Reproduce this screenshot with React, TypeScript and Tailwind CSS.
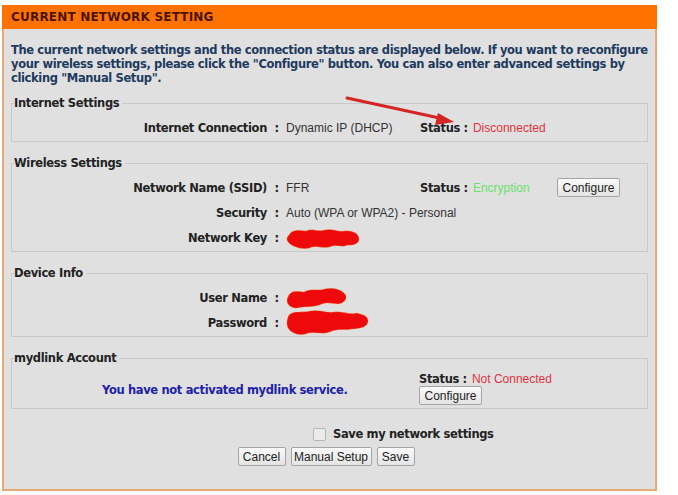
import React from "react";

const bold =
  "font-['DejaVu_Sans',Verdana,sans-serif] font-bold text-[11.5px] tracking-[-0.35px] text-[#222]";
const plainFont = "font-['Liberation_Sans',Arial,sans-serif] text-[12px]";
const btn =
  "h-[19px] border border-[#a4a4a4] rounded-[2px] bg-gradient-to-b from-[#fafafa] to-[#e4e4e4] font-['Liberation_Sans',Arial,sans-serif] text-[12px] text-[#222] leading-none";

type RowProps = {
  label: string;
  children?: React.ReactNode;
  right?: React.ReactNode;
};

const Row = ({ label, children, right }: RowProps) => (
  <div className="flex h-[25px] items-center leading-[14px]">
    <div className={`w-[255px] text-right ${bold}`}>{label}</div>
    <div className={`w-[19px] text-center ${bold}`}>:</div>
    <div className={`w-[134px] ${plainFont} text-[#333]`}>{children}</div>
    {right}
  </div>
);

const Status = ({ value, color }: { value: string; color: string }) => (
  <div className="flex h-[14px] items-center whitespace-nowrap leading-[14px]">
    <span className={bold}>Status :</span>
    <span className={`ml-[5px] ${plainFont} ${color}`}>{value}</span>
  </div>
);

const Box = ({ title, className, children }: { title: string; className?: string; children: React.ReactNode }) => (
  <fieldset className={`mx-[7px] border border-[#c9c9c9] px-0 ${className ?? ""}`}>
    <legend className={`ml-[2px] pr-[3px] leading-[14px] ${bold}`}>{title}</legend>
    {children}
  </fieldset>
);

// red marker blobs hiding the secrets
const Scribble = ({ w, h, d }: { w: number; h: number; d: string }) => (
  <svg width={w} height={h} viewBox={`0 0 ${w} ${h}`} className="overflow-visible">
    <path d={d} fill="#ee0a0a" stroke="#f3c060" strokeWidth="0.6" strokeOpacity="0.5" />
  </svg>
);

export default function App() {
  return (
    <div className="min-h-[495px] bg-white pt-[5px]">
      <div className="relative ml-[2px] w-[655px]">
        <div className="flex h-[24px] items-center bg-[#ff7200] px-[9px]">
          <span className="font-['DejaVu_Sans',Verdana,sans-serif] text-[12px] font-bold tracking-[0.2px] text-[#4a1400]">
            CURRENT NETWORK SETTING
          </span>
        </div>
        <div className="border-x-2 border-b-2 border-[#e6aa78] bg-[#e0e0e0] pb-[23px]">
          <p className="whitespace-nowrap px-[7px] pt-[14px] font-['DejaVu_Sans',Verdana,sans-serif] text-[11.5px] font-bold leading-[14px] tracking-[-0.37px] text-[#1d3a5e]">
            The current network settings and the connection status are displayed below. If you want to reconfigure
            <br />
            your wireless settings, please click the "Configure" button. You can also enter advanced settings by
            <br />
            clicking "Manual Setup".
          </p>

          <Box title="Internet Settings" className="mt-[11px] pb-[1px] pt-[5px]">
            <Row label="Internet Connection" right={<Status value="Disconnected" color="text-[#e0333f]" />}>
              Dynamic IP (DHCP)
            </Row>
          </Box>

          <Box title="Wireless Settings" className="mt-[14px] pb-[1px] pt-[5px]">
            <Row
              label="Network Name (SSID)"
              right={
                <div className="flex items-center">
                  <div className="w-[137px]">
                    <Status value="Encryption" color="text-[#6ce06c]" />
                  </div>
                  <button className={`${btn} w-[63px]`}>Configure</button>
                </div>
              }
            >
              FFR
            </Row>
            <Row label="Security">
              <span className="whitespace-nowrap">Auto (WPA or WPA2) - Personal</span>
            </Row>
            <Row label="Network Key">
              <Scribble
                w={74}
                h={22}
                d="M3 8 C6 2 14 3 20 4 C26 1 32 5 38 3 C46 1 52 5 58 4 C66 3 72 6 73 11 C74 16 68 19 62 18 C56 21 50 17 44 20 C36 22 30 18 24 21 C16 23 6 20 2 15 C0 12 1 10 3 8 Z"
              />
            </Row>
          </Box>

          <Box title="Device Info" className="mt-[14px] pb-[1px] pt-[5px]">
            <Row label="User Name">
              <Scribble
                w={62}
                h={22}
                d="M2 10 C4 3 12 4 18 5 C24 1 32 4 38 2 C46 0 54 2 58 6 C62 9 60 14 56 16 C50 19 44 14 36 17 C28 21 18 19 12 21 C6 22 1 18 1 14 C1 12 1 11 2 10 Z"
              />
            </Row>
            <Row label="Password">
              <Scribble
                w={84}
                h={27}
                d="M3 6 C8 1 16 4 24 2 C32 0 40 4 48 3 C56 2 64 6 70 4 C78 5 83 8 82 13 C81 18 74 20 66 20 C58 22 52 19 44 23 C36 26 28 22 20 25 C12 27 5 24 2 19 C0 15 1 9 3 6 Z"
              />
            </Row>
          </Box>

          <Box title="mydlink Account" className="mt-[14px] pb-[3px] pt-[5px]">
            <div className="flex">
              <div className="flex w-[407px] items-center pl-[90px] pt-[5px]">
                <span className="whitespace-nowrap font-['DejaVu_Sans',Verdana,sans-serif] text-[11.5px] font-bold leading-[14px] tracking-[-0.35px] text-[#1e1ea8]">
                  You have not activated mydlink service.
                </span>
              </div>
              <div className="flex flex-col items-start pt-[2px]">
                <Status value="Not Connected" color="text-[#e0333f]" />
                <button className={`${btn} h-[18px] w-[63px]`}>Configure</button>
              </div>
            </div>
          </Box>

          <div className="mt-[17px] flex h-[16px] items-center pl-[309px]">
            <span className="h-[13px] w-[13px] rounded-[2px] border border-[#b5b5b5] bg-[#ebebeb]" />
            <span className={`ml-[7px] ${bold} leading-[16px]`}>Save my network settings</span>
          </div>
          <div className="mt-[5px] flex justify-center gap-[5px] pr-[7px]">
            <button className={`${btn} w-[48px]`}>Cancel</button>
            <button className={`${btn} w-[81px]`}>Manual Setup</button>
            <button className={`${btn} w-[38px]`}>Save</button>
          </div>
        </div>

        {/* annotation arrow pointing at the status */}
        <svg className="pointer-events-none absolute left-0 top-0" width="655" height="140">
          <line x1="345" y1="93" x2="442" y2="114" stroke="#d42424" strokeWidth="3" strokeLinecap="round" />
          <polygon points="452,117 436,108 433,120" fill="#d42424" />
        </svg>
      </div>
    </div>
  );
}
